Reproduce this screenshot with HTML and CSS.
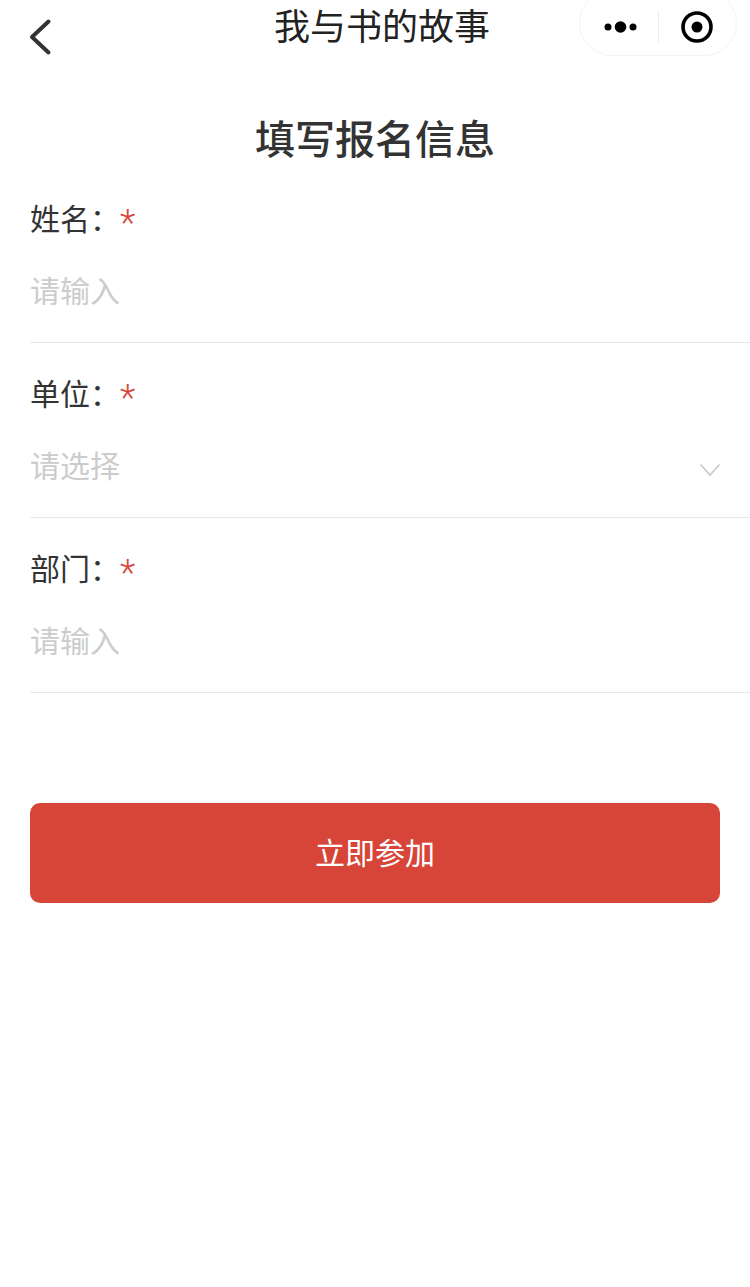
FILE: index.html
```html
<!DOCTYPE html>
<html>
  <head>
    <title>我与书的故事</title>
    <link rel="stylesheet" href="styles.css">
  </head>
  <body>
    <div class="nav-bar">
      <svg class="back-icon" width="24" height="38" viewBox="0 0 24 38">
        <path d="M20.5 3.5 L4 19 L20.5 34.5" fill="none" stroke="#333" stroke-width="4" stroke-linecap="round" stroke-linejoin="round" />
      </svg>
      <p class="nav-title">我与书的故事</p>
      <div class="capsule">
        <svg width="36" height="14" viewBox="0 0 36 14">
          <circle cx="5" cy="7" r="3.5" fill="#000" />
          <circle cx="17.5" cy="7" r="5.8" fill="#000" />
          <circle cx="30" cy="7" r="3.5" fill="#000" />
        </svg>
        <span class="capsule-line"></span>
        <svg width="32" height="32" viewBox="0 0 32 32">
          <circle cx="16" cy="16" r="14" fill="none" stroke="#000" stroke-width="3.6" />
          <circle cx="16" cy="16" r="5.5" fill="#000" />
        </svg>
      </div>
    </div>

    <p class="page-title">填写报名信息</p>

    <div class="form">
      <div class="form-item">
        <p class="label">姓名：<span class="required">*</span></p>
        <p class="placeholder">请输入</p>
      </div>
      <div class="form-item">
        <p class="label">单位：<span class="required">*</span></p>
        <div class="select-row">
          <p class="placeholder">请选择</p>
          <svg class="arrow-icon" width="22" height="14" viewBox="0 0 22 14">
            <path d="M1.5 1.5 L11 12 L20.5 1.5" fill="none" stroke="#c8c8c8" stroke-width="1.6" />
          </svg>
        </div>
      </div>
      <div class="form-item">
        <p class="label">部门：<span class="required">*</span></p>
        <p class="placeholder">请输入</p>
      </div>
    </div>

    <button class="join-button">立即参加</button>
  </body>
</html>
```

FILE: styles.css
```css
body {
  margin: 0;
  background-color: white;
  color: #333;
  font-family: "Noto Sans CJK SC", "Noto Sans", sans-serif;
}
p {
  margin: 0;
}
.nav-bar {
  position: relative;
  height: 98px;
}
.back-icon {
  position: absolute;
  left: 28px;
  top: 18px;
}
.nav-title {
  position: absolute;
  left: 0;
  right: 0;
  top: -2px;
  padding-left: 14px;
  font-size: 36px;
  line-height: 52px;
  color: #222;
  text-align: center;
}
.capsule {
  position: absolute;
  left: 579px;
  top: -10px;
  box-sizing: border-box;
  width: 158px;
  height: 66px;
  padding-top: 8px;
  border: 1px solid #f4f4f4;
  border-radius: 33px;
  display: flex;
  align-items: center;
}
.capsule svg:first-child {
  margin-left: 23px;
}
.capsule-line {
  width: 1px;
  height: 32px;
  margin: 0 22px 0 19px;
  background-color: #ececec;
}
.page-title {
  height: 78px;
  font-size: 40px;
  font-weight: 500;
  line-height: 78px;
  text-align: center;
}
.form {
  padding-left: 30px;
}
.form-item {
  box-sizing: border-box;
  height: 167px;
  margin-bottom: 8px;
  padding-top: 5px;
  border-bottom: 1px solid #e8e8e8;
}
.label {
  font-size: 30px;
  line-height: 72px;
  height: 72px;
}
.required {
  font-family: Roboto, sans-serif;
  font-size: 36px;
  font-weight: 300;
  line-height: 0;
  vertical-align: -5px;
  color: #d64538;
}
.placeholder {
  font-size: 30px;
  line-height: 72px;
  color: #cccccc;
}
.select-row {
  display: flex;
  justify-content: space-between;
  align-items: center;
  padding-right: 29px;
}
.arrow-icon {
  margin-top: 12px;
}
.join-button {
  display: block;
  width: 690px;
  height: 100px;
  margin: 110px 0 0 30px;
  padding-bottom: 6px;
  background-color: #d64538;
  border: none;
  border-radius: 10px;
  color: white;
  font-family: "Noto Sans CJK SC", "Noto Sans", sans-serif;
  font-size: 30px;
}
```
